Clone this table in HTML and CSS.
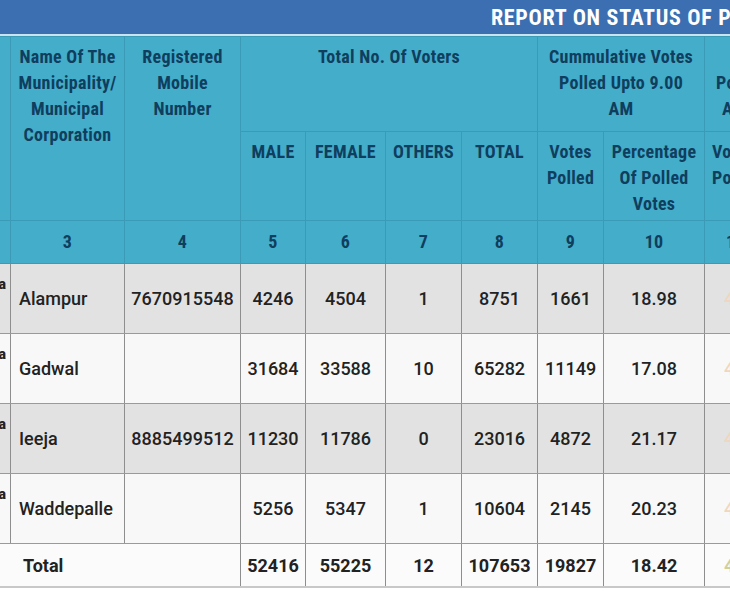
FILE: index.html
```html
<!DOCTYPE html>
<html>
<head>
<meta charset="utf-8">
<link rel="stylesheet" href="styles.css">
</head>
<body>
<div class="page">
  <div class="titlebar"><span class="title">REPORT ON STATUS OF POLLING IN MUNICIPALITIES</span></div>
  <table class="report">
    <colgroup>
      <col class="c0"><col class="c1"><col class="c2"><col class="c3"><col class="c4"><col class="c5"><col class="c6"><col class="c7"><col class="c8"><col class="c9"><col class="c10">
    </colgroup>
    <thead>
      <tr class="h1">
        <th rowspan="2"></th>
        <th rowspan="2">Name Of The<br>Municipality/<br>Municipal<br>Corporation</th>
        <th rowspan="2">Registered<br>Mobile<br>Number</th>
        <th colspan="4">Total No. Of Voters</th>
        <th colspan="2">Cummulative Votes<br>Polled Upto 9.00<br>AM</th>
        <th colspan="2" class="cut"><br>Polled Upto 11.00<br><span class="ind">AM</span></th>
      </tr>
      <tr class="h2">
        <th>MALE</th>
        <th>FEMALE</th>
        <th>OTHERS</th>
        <th>TOTAL</th>
        <th>Votes<br>Polled</th>
        <th>Percentage<br>Of Polled<br>Votes</th>
        <th class="cut2">Votes<br>Polled</th>
        <th>Percentage<br>Of Polled<br>Votes</th>
      </tr>
      <tr class="h3">
        <th>2</th><th>3</th><th>4</th><th>5</th><th>6</th><th>7</th><th>8</th><th>9</th><th>10</th><th class="n11">11</th><th>12</th>
      </tr>
    </thead>
    <tbody>
      <tr class="odd">
        <td class="stub"><span class="mark">a</span></td><td class="name">Alampur</td><td>7670915548</td><td>4246</td><td>4504</td><td>1</td><td>8751</td><td>1661</td><td>18.98</td><td class="lastc"><span class="faint">4</span></td><td></td>
      </tr>
      <tr class="even">
        <td class="stub"><span class="mark">a</span></td><td class="name">Gadwal</td><td></td><td>31684</td><td>33588</td><td>10</td><td>65282</td><td>11149</td><td>17.08</td><td class="lastc"><span class="faint">4</span></td><td></td>
      </tr>
      <tr class="odd">
        <td class="stub"><span class="mark">a</span></td><td class="name">Ieeja</td><td>8885499512</td><td>11230</td><td>11786</td><td>0</td><td>23016</td><td>4872</td><td>21.17</td><td class="lastc"><span class="faint">4</span></td><td></td>
      </tr>
      <tr class="even">
        <td class="stub"><span class="mark">a</span></td><td class="name">Waddepalle</td><td></td><td>5256</td><td>5347</td><td>1</td><td>10604</td><td>2145</td><td>20.23</td><td class="lastc"><span class="faint">4</span></td><td></td>
      </tr>
      <tr class="total">
        <td colspan="3" class="tlabel">Total</td><td>52416</td><td>55225</td><td>12</td><td>107653</td><td>19827</td><td>18.42</td><td class="lastc"><span class="faint green">4</span></td><td></td>
      </tr>
    </tbody>
  </table>
</div>
</body>
</html>
```

FILE: styles.css
```css
html, body {
  margin: 0;
  padding: 0;
  background: #ffffff;
}
body {
  width: 730px;
  height: 591px;
  overflow: hidden;
}
.page {
  width: 730px;
  overflow: hidden;
}
.titlebar {
  height: 34px;
  background: #3c6fb2;
  border-bottom: 2px solid #c9e4ef;
  box-sizing: content-box;
  white-space: nowrap;
  overflow: hidden;
  padding-left: 491px;
}
.title {
  display: inline-block;
  font-family: "Roboto Condensed", "Liberation Sans Narrow", "DejaVu Sans Condensed", Roboto, sans-serif;
  font-stretch: condensed;
  font-weight: 700;
  font-size: 22px;
  line-height: 36px;
  color: #ffffff;
  letter-spacing: 0.7px;
}
.report {
  table-layout: fixed;
  border-collapse: collapse;
  width: 850px;
  margin-left: -56px;
}
.c0 { width: 66px; }
.c1 { width: 114px; }
.c2 { width: 116px; }
.c3 { width: 65px; }
.c4 { width: 80px; }
.c5 { width: 76px; }
.c6 { width: 76px; }
.c7 { width: 66px; }
.c8 { width: 101px; }
.c9 { width: 66px; }
.c10 { width: 24px; }

.report th {
  background: #44adc9;
  color: #0f3e5e;
  font-family: "Roboto Condensed", "Liberation Sans Narrow", "DejaVu Sans Condensed", Roboto, sans-serif;
  font-stretch: condensed;
  font-weight: 700;
  font-size: 18px;
  line-height: 26px;
  letter-spacing: 0.25px;
  text-align: center;
  vertical-align: top;
  padding: 7px 0 0 0;
  border: 1px solid #3b9ab6;
  white-space: nowrap;
  overflow: hidden;
}
.report .h1 th { height: 87px; }
.report .h2 th { height: 81px; }
.report .h3 th {
  height: 42px;
  padding: 0;
  vertical-align: middle;
}
.report .h3 th.n11 {
  text-align: left;
  padding-left: 21px;
}
.report th.cut {
  text-align: left;
  padding-left: 11px;
}
.ind { padding-left: 6px; }
.report th.cut2 {
  text-align: left;
  padding-left: 7px;
}

.report td {
  font-family: Roboto, "Liberation Sans", sans-serif;
  font-weight: 500;
  font-size: 18px;
  color: #222222;
  text-align: center;
  vertical-align: middle;
  height: 69px;
  padding: 0;
  border: 1px solid #8e8e8e;
  border-top-color: #9a9a9a;
  border-bottom-color: #9a9a9a;
  white-space: nowrap;
  overflow: hidden;
}
.report tr.odd td { background: #e2e2e2; }
.report tr.even td { background: #f8f8f8; }
.report tr.total td {
  background: #fbfbfb;
  font-weight: 700;
  height: 42px;
  border-bottom: 2px solid #c8c8c8;
}
.report td.name {
  text-align: left;
  padding-left: 8px;
}
.report td.tlabel {
  text-align: left;
  padding-left: 78px;
}
.report td.stub {
  text-align: right;
  vertical-align: top;
  height: 61px;
  padding-top: 8px;
  padding-right: 4px;
}
.report td.lastc {
  text-align: left;
  padding-left: 19px;
}
.mark {
  font-weight: 900;
  color: #222;
  font-size: 14px;
}
.faint {
  color: #f0d6bd;
}
.faint.green { color: #d0d09a; }
```
